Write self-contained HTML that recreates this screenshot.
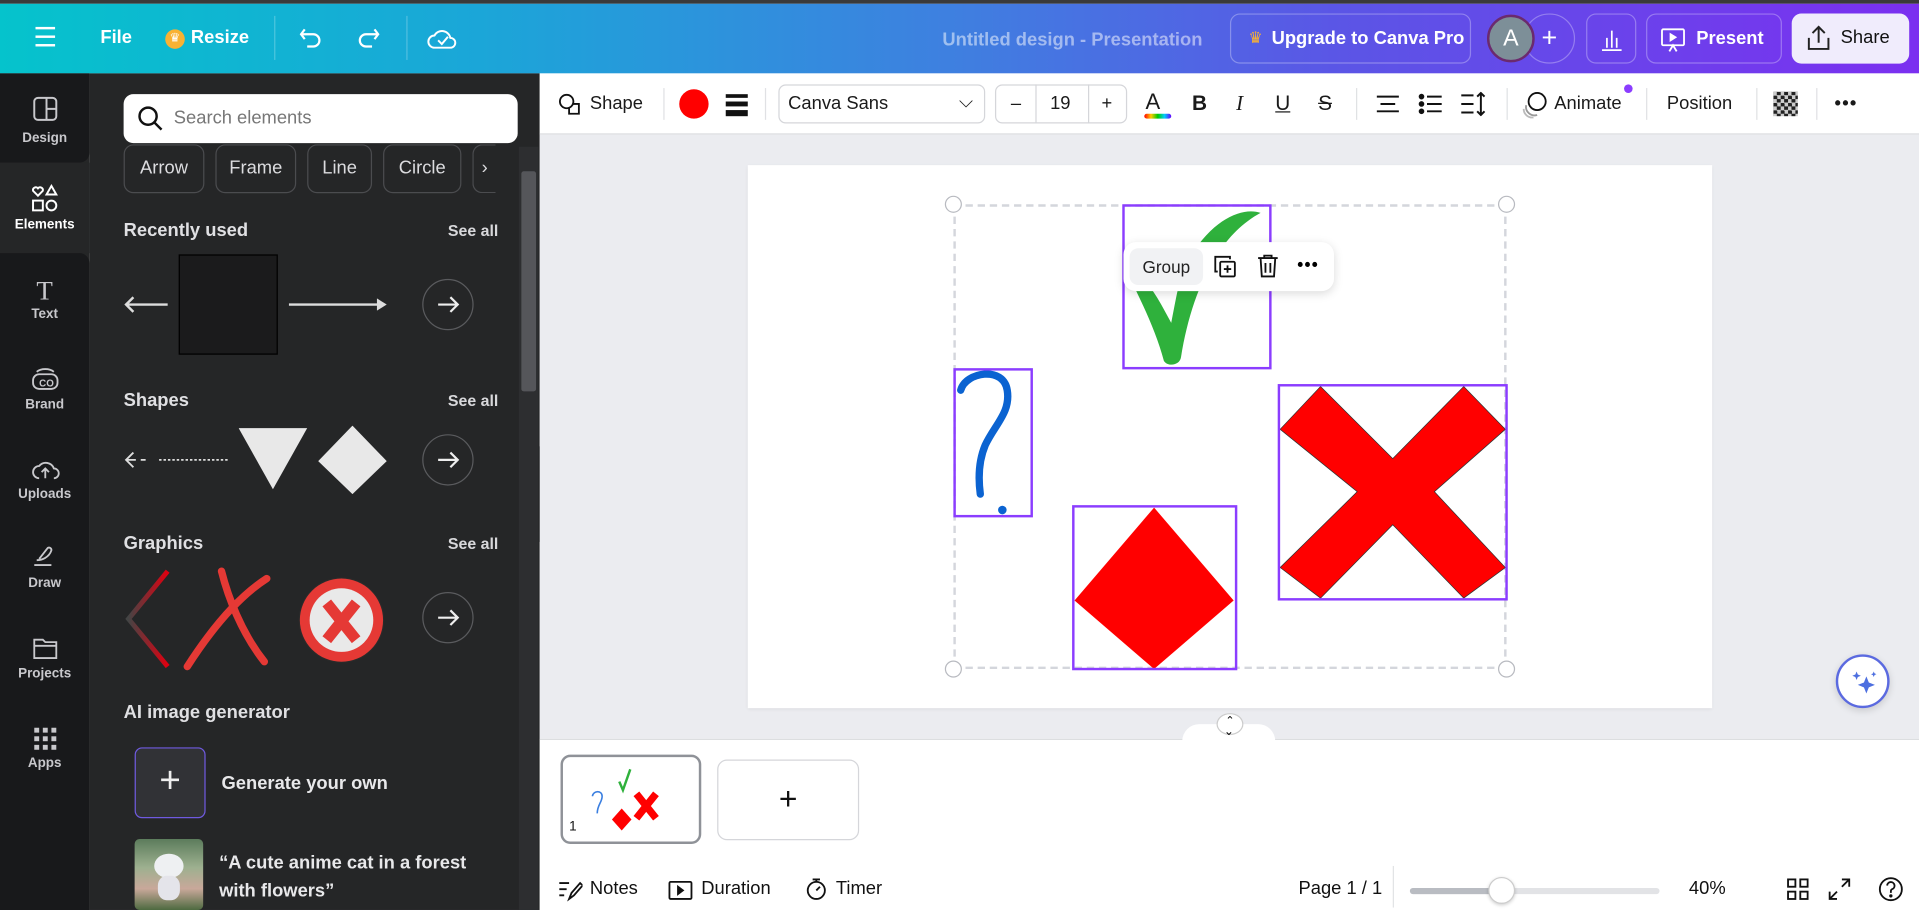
<!DOCTYPE html>
<html><head><meta charset="utf-8"><style>
*{box-sizing:border-box;margin:0;padding:0}
html,body{width:1919px;height:910px;overflow:hidden;background:#fff}
#w{width:1568px;height:744px;transform:scale(1.22385,1.2231);transform-origin:0 0;position:relative;font-family:"Liberation Sans",sans-serif;overflow:hidden}
.a{position:absolute}
.top{left:0;top:0;width:1568px;height:60px;background:linear-gradient(90deg,#05c3cc 0%,#1ba6d8 25%,#3f7fe0 50%,#5b55e6 70%,#7b2ff0 100%);border-top:3px solid #3a3a3a}
.tw{color:#fff;font-size:15px;font-weight:bold}
.btn{border:1px solid rgba(255,255,255,.3);border-radius:8px}
.rail{left:0;top:60px;width:73px;height:684px;background:#252627}
.ri{position:absolute;left:0;width:73px;background:#18191b;color:#c8c8cc;font-size:11px;font-weight:bold;text-align:center}
.panel{left:73px;top:60px;width:368px;height:684px;background:#252627;color:#e8e8ea}
.chip{position:absolute;top:58px;height:40px;border:1px solid #4b4c4f;border-radius:8px;color:#dcdcdf;font-size:15px;line-height:38px;text-align:center}
.h{position:absolute;font-size:15px;font-weight:bold;color:#e0e0e3}
.sa{position:absolute;left:293px;font-size:13px;font-weight:bold;color:#d8d8db}
.cb{position:absolute;width:42px;height:42px;border:1px solid #5a5b5e;border-radius:50%}
.tb{left:441px;top:60px;width:1127px;height:50px;background:#fff;border-bottom:1px solid #dcdde0;font-size:15px;color:#1a1a1a}
.tb .a{top:0;line-height:50px}
.sep{position:absolute;top:12px;width:1px;height:26px;background:#e0e1e4}
.sel{border:2px solid #8b3dff}
.hd{position:absolute;width:14px;height:14px;border-radius:50%;background:#fff;border:1px solid #b8bac0}
</style></head><body><div id="w">
<div class="a top">
 <div class="a" style="left:29px;top:19px;width:16px"><div style="height:2px;background:#fff;margin-bottom:5px"></div><div style="height:2px;background:#fff;margin-bottom:5px"></div><div style="height:2px;background:#fff"></div></div>
 <div class="a tw" style="left:82px;top:19px">File</div>
 <div class="a" style="left:135px;top:21px;width:16px;height:16px;border-radius:50%;background:#f9b233;color:#fff;font-size:10px;text-align:center;line-height:16px">♛</div>
 <div class="a tw" style="left:156px;top:19px">Resize</div>
 <div class="a" style="left:224px;top:10px;width:1px;height:36px;background:rgba(255,255,255,.25)"></div>
 <svg class="a" style="left:243px;top:18px" width="22" height="22" viewBox="0 0 22 22" fill="none" stroke="#fff" stroke-width="1.8"><path d="M6 3 L3 7 L6 11 M3 7 H13 a5 5 0 0 1 0 10 H8"/></svg>
 <svg class="a" style="left:290px;top:18px" width="22" height="22" viewBox="0 0 22 22" fill="none" stroke="#fff" stroke-width="1.8"><path d="M16 3 L19 7 L16 11 M19 7 H9 a5 5 0 0 0 0 10 H14"/></svg>
 <div class="a" style="left:332px;top:10px;width:1px;height:36px;background:rgba(255,255,255,.25)"></div>
 <svg class="a" style="left:348px;top:17px" width="26" height="24" viewBox="0 0 26 24" fill="none" stroke="#fff" stroke-width="1.6"><path d="M7 19 a5 5 0 0 1 0-10 a7 7 0 0 1 13 2 a4 4 0 0 1 0 8 Z"/><path d="M10 13 l3 3 l5-6"/></svg>
 <div class="a" style="left:770px;top:21px;color:rgba(255,255,255,.5);font-size:15px;font-weight:bold">Untitled design - Presentation</div>
 <div class="a btn" style="left:1005px;top:8px;width:197px;height:41px"><span style="position:absolute;left:14px;top:11px;color:#f9b233;font-size:13px">♛</span><span class="tw" style="position:absolute;left:33px;top:11px">Upgrade to Canva Pro</span></div>
 <div class="a" style="left:1245px;top:8px;width:42px;height:41px;border:1px solid rgba(255,255,255,.3);border-radius:21px;color:#fff;font-size:22px;text-align:center;line-height:38px">+</div>
 <div class="a" style="left:1215px;top:9px;width:39px;height:39px;border-radius:50%;background:#7d8f98;border:2px solid #6b2a6e;color:#fff;font-size:19px;text-align:center;line-height:35px">A</div>
 <div class="a btn" style="left:1296px;top:8px;width:41px;height:41px"><svg style="position:absolute;left:11px;top:10px" width="18" height="20" fill="none" stroke="#fff" stroke-width="1.4"><path d="M1 19H17M5 17V9M9 17V3M13 17V9"/></svg></div>
 <div class="a btn" style="left:1345px;top:8px;width:111px;height:41px"><svg style="position:absolute;left:10px;top:10px" width="22" height="22" fill="none" stroke="#fff" stroke-width="1.5"><rect x="2" y="2" width="18" height="13" rx="1"/><path d="M9 6l4 2.5-4 2.5z" fill="#fff"/><path d="M8 20l3-5 3 5"/></svg><span class="tw" style="position:absolute;left:40px;top:11px">Present</span></div>
 <div class="a" style="left:1464px;top:8px;width:96px;height:41px;background:#f0ecfc;border-radius:8px"><svg style="position:absolute;left:11px;top:9px" width="22" height="22" fill="none" stroke="#222" stroke-width="1.6"><path d="M3 11v9h16v-9M11 15V2M6 7l5-5 5 5"/></svg><span style="position:absolute;left:40px;top:11px;font-size:15px;color:#111">Share</span></div>
</div>
<div class="a rail">
 <div class="ri" style="top:0;height:73px;border-radius:0 0 8px 0"><svg style="margin-top:18px" width="22" height="22" fill="none" stroke="#c8c8cc" stroke-width="1.6"><rect x="2" y="2" width="18" height="18" rx="3"/><path d="M12 2V20M12 11H20"/></svg><div style="margin-top:4px">Design</div></div>
 <div class="ri" style="top:73px;height:74px;background:#252627;color:#fff"><svg style="margin-top:17px" width="24" height="24" fill="none" stroke="#fff" stroke-width="1.6"><path d="M6 10 l-4-4 a2.3 2.3 0 0 1 4-2 a2.3 2.3 0 0 1 4 2 Z"/><path d="M17 2 l4 7 h-8 z"/><rect x="2" y="14" width="8" height="8"/><circle cx="17" cy="18" r="4"/></svg><div style="margin-top:1px">Elements</div></div>
 <div class="ri" style="top:147px;height:537px;border-radius:0 8px 0 0"></div>
 <div class="ri" style="top:165px;background:none"><div style="font-size:22px;font-family:'Liberation Serif',serif;font-weight:normal">T</div><div>Text</div></div>
 <div class="ri" style="top:238px;background:none"><svg width="26" height="24" fill="none" stroke="#c8c8cc" stroke-width="1.5"><rect x="3" y="8" width="20" height="12" rx="5"/><path d="M6 6 a9 6 0 0 1 14 0"/><text x="8" y="18" font-size="8" fill="#c8c8cc" stroke="none">CO</text></svg><div>Brand</div></div>
 <div class="ri" style="top:311px;background:none"><svg width="26" height="24" fill="none" stroke="#c8c8cc" stroke-width="1.5"><path d="M8 20a5 5 0 0 1 0-10a7 7 0 0 1 12 2a4 4 0 0 1 0 8"/><path d="M13 20v-8M10 15l3-3 3 3"/></svg><div>Uploads</div></div>
 <div class="ri" style="top:384px;background:none"><svg width="26" height="24" fill="none" stroke="#c8c8cc" stroke-width="1.5"><path d="M4 18h14M6 14c4 0 10-2 12-8a2 2 0 0 0-3-2l-7 9"/></svg><div>Draw</div></div>
 <div class="ri" style="top:458px;background:none"><svg width="26" height="24" fill="none" stroke="#c8c8cc" stroke-width="1.5"><path d="M4 5h7l2 2h9v13H4z"/><path d="M4 10h18"/></svg><div>Projects</div></div>
 <div class="ri" style="top:533px;background:none"><svg width="22" height="22" fill="#c8c8cc"><rect x="2" y="2" width="4" height="4"/><rect x="9" y="2" width="4" height="4"/><rect x="16" y="2" width="4" height="4"/><rect x="2" y="9" width="4" height="4"/><rect x="9" y="9" width="4" height="4"/><rect x="16" y="9" width="4" height="4"/><rect x="2" y="16" width="4" height="4"/><rect x="9" y="16" width="4" height="4"/><rect x="16" y="16" width="4" height="4"/></svg><div>Apps</div></div>
</div>
<div class="a panel">
 <div class="a" style="left:28px;top:17px;width:322px;height:40px;background:#fff;border-radius:8px"><svg style="position:absolute;left:11px;top:9px" width="22" height="22" fill="none" stroke="#111" stroke-width="2"><circle cx="9" cy="9" r="7"/><path d="M14 14l6 6"/></svg><span style="position:absolute;left:41px;top:11px;color:#777;font-size:15px">Search elements</span></div>
 <div class="chip" style="left:28px;width:66px">Arrow</div>
 <div class="chip" style="left:103px;width:66px">Frame</div>
 <div class="chip" style="left:178px;width:53px">Line</div>
 <div class="chip" style="left:240px;width:64px">Circle</div>
 <div class="chip" style="left:313px;width:19px;border-right:none;border-radius:8px 0 0 8px">›</div>
 <div class="h" style="left:28px;top:120px">Recently used</div><div class="sa" style="top:121px">See all</div>
 <svg class="a" style="left:28px;top:180px" width="40" height="18" fill="none" stroke="#ddd" stroke-width="2"><path d="M36 9H2M8 3L2 9l6 6"/></svg>
 <div class="a" style="left:73px;top:148px;width:81px;height:82px;background:#1b1b1c;border:1px solid #000"></div>
 <svg class="a" style="left:163px;top:180px" width="84" height="18"><path d="M0 9H74" stroke="#ddd" stroke-width="2"/><path d="M72 4l8 5-8 5z" fill="#ddd"/></svg>
 <div class="cb" style="left:272px;top:168px"></div><div class="cb" style="left:272px;top:295px"></div><div class="cb" style="left:272px;top:424px"></div>
 <svg class="a" style="left:283px;top:179px" width="20" height="20" fill="none" stroke="#eee" stroke-width="1.8"><path d="M2 10H18M12 4l6 6-6 6"/></svg>
 <svg class="a" style="left:283px;top:306px" width="20" height="20" fill="none" stroke="#eee" stroke-width="1.8"><path d="M2 10H18M12 4l6 6-6 6"/></svg>
 <svg class="a" style="left:283px;top:435px" width="20" height="20" fill="none" stroke="#eee" stroke-width="1.8"><path d="M2 10H18M12 4l6 6-6 6"/></svg>
 <div class="h" style="left:28px;top:259px">Shapes</div><div class="sa" style="top:260px">See all</div>
 <svg class="a" style="left:28px;top:308px" width="90" height="16" fill="none" stroke="#ddd" stroke-width="1.5"><path d="M8 2L2 8l6 6M2 8h8M14 8h4"/><path d="M29 8H85" stroke-dasharray="2 1.6"/></svg>
 <svg class="a" style="left:122px;top:288px" width="125" height="58"><path d="M0 2H56L28 52z" fill="#e8e8e8"/><path d="M65 29L93 0L121 29L93 56z" fill="#e8e8e8"/></svg>
 <div class="h" style="left:28px;top:376px">Graphics</div><div class="sa" style="top:377px">See all</div>
 <svg class="a" style="left:28px;top:403px" width="225" height="86"><defs><linearGradient id="g1" x1="0" x2="1"><stop offset="0" stop-color="#444"/><stop offset="1" stop-color="#e00010"/></linearGradient></defs><path d="M36 4L4 43L36 82" fill="none" stroke="url(#g1)" stroke-width="4"/><path d="M80 4c5 20 16 50 35 74M52 82c18-28 40-56 65-72" fill="none" stroke="#e53935" stroke-width="6" stroke-linecap="round"/><circle cx="178" cy="44" r="35" fill="#2a2a2a"/><circle cx="178" cy="44" r="34" fill="#e53935"/><circle cx="178" cy="44" r="26" fill="#e9e9e9"/><path d="M166 30l24 30M190 30l-24 30" stroke="#e53935" stroke-width="9"/></svg>
 <div class="h" style="left:28px;top:514px">AI image generator</div>
 <div class="a" style="left:37px;top:551px;width:58px;height:58px;border-radius:6px;border:1px solid #6f5ae0;background:#313236;color:#eee;font-size:30px;text-align:center;line-height:54px;font-weight:200">+</div>
 <div class="a" style="left:108px;top:572px;font-size:15px;font-weight:bold">Generate your own</div>
 <div class="a" style="left:37px;top:626px;width:56px;height:58px;border-radius:4px;background:linear-gradient(180deg,#5c7c5c,#9db08f 40%,#c9a89a 70%,#4d6a40)"><div style="position:absolute;left:16px;top:12px;width:24px;height:20px;border-radius:50%;background:#eef0f2"></div><div style="position:absolute;left:19px;top:30px;width:18px;height:20px;border-radius:40%;background:#e4e4ea"></div></div>
 <div class="a" style="left:106px;top:634px;font-size:15px;font-weight:bold;line-height:23px">“A cute anime cat in a forest<br>with flowers”</div>
 <div class="a" style="left:351px;top:60px;width:16px;height:624px;background:#2d2e30"></div>
 <div class="a" style="left:353px;top:80px;width:12px;height:180px;background:#55565a;border-radius:2px"></div>
</div>
<div class="a" style="left:440px;top:365px;width:14px;height:78px;background:#252627;border-radius:0 8px 8px 0;color:#bbb;font-size:10px;line-height:78px;text-align:center">‹</div>
<div class="a tb">
 <svg class="a" style="left:15px;top:16px" width="18" height="18" fill="none" stroke="#111" stroke-width="1.5"><circle cx="7" cy="7" r="5.5"/><path d="M9 12.5V17H17V9H12.5"/></svg>
 <div class="a" style="left:41px">Shape</div><div class="sep" style="left:101px"></div>
 <div class="a" style="left:114px;top:13px;width:24px;height:24px;border-radius:50%;background:#f00"></div>
 <div class="a" style="left:152px;top:17px;width:18px"><div style="height:3px;background:#111;margin-bottom:3px"></div><div style="height:4px;background:#111;margin-bottom:3px"></div><div style="height:5px;background:#111"></div></div>
 <div class="sep" style="left:184px"></div>
 <div class="a" style="left:195px;top:9px;width:169px;height:32px;border:1px solid #d5d6da;border-radius:6px;line-height:30px;padding-left:7px">Canva Sans<span style="position:absolute;right:9px;top:-1px">⌵</span></div>
 <div class="a" style="left:372px;top:9px;width:108px;height:32px;border:1px solid #d5d6da;border-radius:6px;line-height:30px"><span style="position:absolute;left:12px">–</span><span style="position:absolute;left:32px;top:-1px;width:1px;height:32px;background:#d5d6da"></span><span style="position:absolute;left:44px">19</span><span style="position:absolute;left:75px;top:-1px;width:1px;height:32px;background:#d5d6da"></span><span style="position:absolute;left:86px">+</span></div>
 <div class="a" style="left:495px;font-size:18px;line-height:46px">A</div><div class="a" style="left:494px;top:33px;width:22px;height:4px;border-radius:2px;background:linear-gradient(90deg,#f00,#fc0,#0c0,#0cf,#60f);line-height:0"></div>
 <div class="a" style="left:533px;font-weight:bold;font-size:17px">B</div>
 <div class="a" style="left:569px;font-style:italic;font-size:17px;font-family:'Liberation Serif',serif">I</div>
 <div class="a" style="left:601px;text-decoration:underline;font-size:17px">U</div>
 <div class="a" style="left:636px;text-decoration:line-through;font-size:17px">S</div>
 <div class="sep" style="left:667px"></div>
 <svg class="a" style="left:683px;top:17px" width="20" height="16" stroke="#111" stroke-width="1.6"><path d="M1 2h18M4 8h12M1 14h18"/></svg>
 <svg class="a" style="left:718px;top:16px" width="20" height="18" stroke="#111" stroke-width="1.6"><circle cx="2.5" cy="3" r="1.5" fill="#111"/><circle cx="2.5" cy="9" r="1.5" fill="#111"/><circle cx="2.5" cy="15" r="1.5" fill="#111"/><path d="M7 3h12M7 9h12M7 15h12"/></svg>
 <svg class="a" style="left:752px;top:15px" width="22" height="20" stroke="#111" stroke-width="1.6" fill="none"><path d="M1 3h10M1 10h10M1 17h10M17 1v18M14 4l3-3 3 3M14 16l3 3 3-3"/></svg>
 <div class="sep" style="left:790px"></div>
 <svg class="a" style="left:802px;top:14px" width="24" height="24" fill="none" stroke="#111" stroke-width="1.5"><circle cx="13" cy="9" r="7"/><path d="M4 12a7 7 0 0 0 9 8" stroke="#999"/><path d="M2 15a7 7 0 0 0 8 7" stroke="#bbb"/></svg>
 <div class="a" style="left:829px">Animate</div><div class="a" style="left:886px;top:9px;width:7px;height:7px;border-radius:50%;background:#8b3dff"></div>
 <div class="sep" style="left:904px"></div><div class="a" style="left:921px">Position</div><div class="sep" style="left:994px"></div>
 <div class="a" style="left:1008px;top:15px;width:20px;height:20px;background:repeating-conic-gradient(#222 0 25%,#ccc 0 50%) 0 0/6px 6px"></div>
 <div class="sep" style="left:1043px"></div>
 <div class="a" style="left:1058px;font-weight:bold;letter-spacing:1px">•••</div>
</div>
<div class="a" style="left:441px;top:110px;width:1127px;height:494px;background:#ebecf0"></div>
<div class="a" style="left:611px;top:135px;width:788px;height:444px;background:#fff;box-shadow:0 1px 3px rgba(0,0,0,.08)"></div>
<div class="a" style="left:779px;top:167px;width:452px;height:380px;border:2px dashed #d4d6dc"></div>
<div class="hd" style="left:772px;top:160px"></div><div class="hd" style="left:1224px;top:160px"></div><div class="hd" style="left:772px;top:540px"></div><div class="hd" style="left:1224px;top:540px"></div>
<svg class="a" style="left:917px;top:167px" width="122" height="135"><path d="M6 60c10 20 22 45 28 68c3 5 13 4 14-3c8-50 28-98 65-118c-15-5-40 5-60 40c-6 10-9 30-13 50c-8-15-16-30-25-38c-5 0-8 0-9 1z" fill="#2fb13c"/></svg>
<div class="a sel" style="left:917px;top:167px;width:122px;height:135px"></div>
<svg class="a" style="left:779px;top:301px" width="65" height="122"><path d="M6 18c4-15 35-20 38 0c3 18-10 28-18 45c-5 12-6 25-4 40" fill="none" stroke="#0b63d1" stroke-width="6" stroke-linecap="round"/><circle cx="40" cy="116" r="3.5" fill="#0b63d1"/></svg>
<div class="a sel" style="left:779px;top:301px;width:65px;height:122px"></div>
<svg class="a" style="left:876px;top:413px" width="135" height="135"><path d="M67 2L132 78L67 134L2 78z" fill="#f00"/></svg>
<div class="a sel" style="left:876px;top:413px;width:135px;height:135px"></div>
<svg class="a" style="left:1044px;top:314px" width="187" height="176"><polygon points="35,2 94,61 152,2 186,37 128,88 186,150 152,175 94,115 35,175 2,150 65,88 2,37" fill="#f00" stroke="#333" stroke-width=".6"/></svg>
<div class="a sel" style="left:1044px;top:314px;width:188px;height:177px"></div>
<div class="a" style="left:918px;top:198px;width:172px;height:40px;background:#fff;border-radius:10px;box-shadow:0 2px 8px rgba(0,0,0,.15)">
 <div class="a" style="left:5px;top:5px;width:60px;height:30px;background:#f1f2f4;border-radius:7px;font-size:14px;color:#222;text-align:center;line-height:30px">Group</div>
 <svg class="a" style="left:73px;top:10px" width="20" height="20" fill="none" stroke="#111" stroke-width="1.5"><path d="M4 14H2V2h12v2"/><rect x="6" y="6" width="12" height="12" rx="1"/><path d="M12 9v6M9 12h6"/></svg>
 <svg class="a" style="left:108px;top:9px" width="20" height="20" fill="none" stroke="#111" stroke-width="1.5"><path d="M2 4h16M7 4V2h6v2M4 4l1 15h10l1-15M8 8v8M12 8v8"/></svg>
 <div class="a" style="left:142px;top:10px;font-size:14px;font-weight:bold;letter-spacing:1px">•••</div>
</div>
<div class="a" style="left:1500px;top:535px;width:44px;height:44px;border-radius:50%;background:#fff;border:2px solid #5b6ae0;box-shadow:0 2px 6px rgba(0,0,0,.15)"><svg style="position:absolute;left:10px;top:10px" width="22" height="22" fill="#4d6fe0"><path d="M13 6l2 5 5 2-5 2-2 5-2-5-5-2 5-2z"/><path d="M5 2l1 2.5 2.5 1-2.5 1L5 9 4 6.5 1.5 5.5 4 4.5z"/><path d="M19 2l.7 1.5 1.5.7-1.5.7L19 6.5l-.7-1.5-1.5-.7 1.5-.7z"/></svg></div>
<div class="a" style="left:441px;top:604px;width:1127px;height:140px;background:#fff;border-top:1px solid #dcdde0"></div>
<div class="a" style="left:966px;top:592px;width:76px;height:14px;background:#fff;border-radius:14px 14px 0 0"></div>
<div class="a" style="left:994px;top:583px;width:22px;height:18px;border-radius:50%;background:#fff;border:1px solid #ccc;font-size:9px;text-align:center">⌃</div>
<div class="a" style="left:1000px;top:593px;font-size:10px">⌄</div>
<div class="a" style="left:458px;top:617px;width:115px;height:73px;border:2px solid #8f9298;border-radius:8px;background:#fff">
 <div class="a" style="left:5px;top:51px;font-size:11px;color:#111">1</div>
 <svg class="a" style="left:18px;top:4px" width="80" height="64"><path d="M28 16l3 7 6-17" fill="none" stroke="#2fb13c" stroke-width="2"/><path d="M6 28c1-5 8-5 8 0c0 5-4 7-4 14" fill="none" stroke="#3b7fe0" stroke-width="1.3"/><path d="M30 38l8 9-8 9-8-9z" fill="#f00"/><path d="M42 26l16 20M58 26l-16 20" stroke="#f00" stroke-width="6"/></svg>
</div>
<div class="a" style="left:586px;top:621px;width:116px;height:66px;border:1px solid #d5d6da;border-radius:8px;font-size:26px;text-align:center;line-height:62px;color:#111;font-weight:200">+</div>
<div class="a" style="left:456px;top:718px;font-size:15px;color:#111;width:1110px;height:20px">
 <svg class="a" style="left:0;top:1px" width="20" height="18" fill="none" stroke="#111" stroke-width="1.5"><path d="M1 3h8M1 8h6M1 13h4M9 16l2-5 7-8 2 2-7 8z"/></svg>
 <span class="a" style="left:26px">Notes</span>
 <svg class="a" style="left:90px;top:1px" width="20" height="18" fill="none" stroke="#111" stroke-width="1.5"><rect x="1" y="2" width="18" height="14" rx="1"/><path d="M8 6l4 3-4 3z" fill="#111"/></svg>
 <span class="a" style="left:117px">Duration</span>
 <svg class="a" style="left:201px;top:-1px" width="20" height="20" fill="none" stroke="#111" stroke-width="1.5"><circle cx="10" cy="11" r="7"/><path d="M7 2h6M10 2v2M10 11l3-3"/></svg>
 <span class="a" style="left:227px">Timer</span>
 <span class="a" style="left:605px">Page 1 / 1</span>
 <div class="a" style="left:682px;top:-10px;width:1px;height:34px;background:#e2e3e6"></div>
 <div class="a" style="left:696px;top:8px;width:204px;height:5px;border-radius:3px;background:#e2e3e6"></div>
 <div class="a" style="left:696px;top:8px;width:75px;height:5px;border-radius:3px;background:#b9bcc2"></div>
 <div class="a" style="left:760px;top:-1px;width:22px;height:22px;border-radius:50%;background:#fff;border:1px solid #ccc;box-shadow:0 1px 3px rgba(0,0,0,.2)"></div>
 <span class="a" style="left:924px">40%</span>
 <svg class="a" style="left:1004px;top:0" width="18" height="18" fill="none" stroke="#111" stroke-width="1.5"><rect x="1" y="1" width="6" height="6"/><rect x="11" y="1" width="6" height="6"/><rect x="1" y="11" width="6" height="6"/><rect x="11" y="11" width="6" height="6"/></svg>
 <svg class="a" style="left:1038px;top:0" width="18" height="18" fill="none" stroke="#111" stroke-width="1.5"><path d="M11 1h6v6M17 1l-6 6M1 11v6h6M1 17l6-6"/></svg>
 <svg class="a" style="left:1078px;top:-2px" width="22" height="22" fill="none" stroke="#111" stroke-width="1.5"><circle cx="11" cy="11" r="9"/><path d="M8 8a3 3 0 1 1 4 3c-1 .5-1 1-1 3"/><circle cx="11" cy="16.5" r=".6" fill="#111"/></svg>
</div>
</div></body></html>
